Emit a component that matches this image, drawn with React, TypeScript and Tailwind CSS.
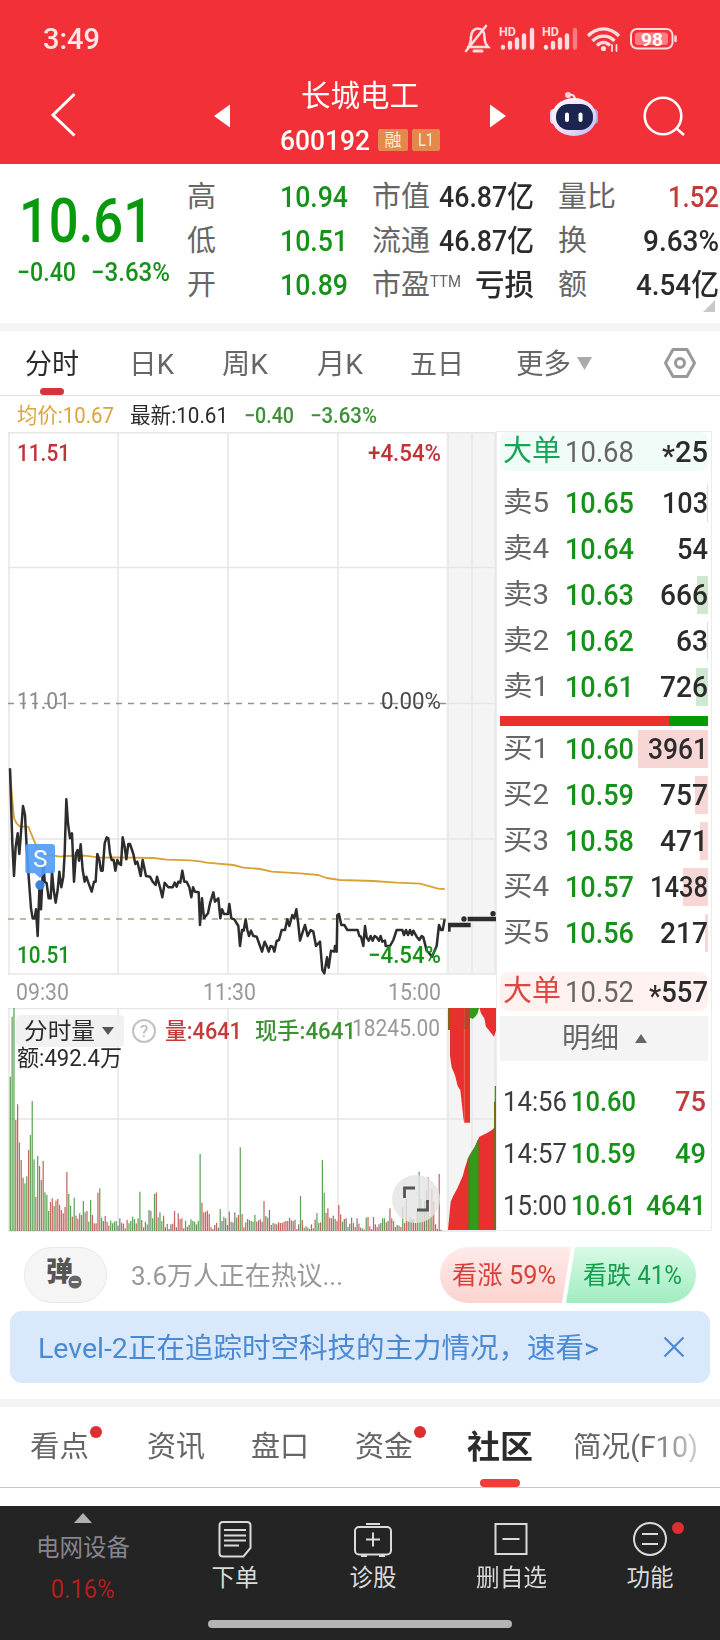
import { ReactNode, useLayoutEffect, useRef, useState } from "react";

/** One line of text squeezed or stretched horizontally to fill its own box. */
function Fit({ className = "", children }: { className?: string; children: ReactNode }) {
  const box = useRef<HTMLSpanElement>(null);
  const inner = useRef<HTMLSpanElement>(null);
  const [k, setK] = useState(1);
  useLayoutEffect(() => {
    if (box.current && inner.current && inner.current.offsetWidth) {
      setK(box.current.clientWidth / inner.current.getBoundingClientRect().width);
    }
  }, []);
  return (
    <span ref={box} className={"block shrink-0 whitespace-nowrap leading-none " + className}>
      <span ref={inner} className="inline-block origin-left" style={{ transform: `scaleX(${k})` }}>
        {children}
      </span>
    </span>
  );
}

function StatusIcons() {
  return (
    <svg width="216" height="32" viewBox="464 23 216 32" fill="none" stroke="#ffdcdd" strokeWidth="2.6" strokeLinecap="round">
      <path d="M468 47h20c-3-3-3.500-5-3.500-10 0-5-2.500-8.500-6.500-8.500s-7 3.500-7 8.500c0 4-.5 6-1.500 8M486 26l-20 25" />
      <path d="M474 51h8" strokeWidth="3" />
      <g strokeWidth="4.400">
        <path d="M503 47v.5M510 43v4.500M517 39.500v8M524 35.500v12M532 30v17.500" />
        <path d="M546 47v.5M553 43v4.500M560 39.500v8M567 35.500v12" />
        <path d="M575 30v17.500" opacity=".45" />
      </g>
      <g fill="#ffdcdd" stroke="none" fontFamily="Roboto, sans-serif" fontSize="12" fontWeight="700">
        <text x="499" y="36" textLength="17" lengthAdjust="spacingAndGlyphs">HD</text>
        <text x="542" y="36" textLength="17" lengthAdjust="spacingAndGlyphs">HD</text>
      </g>
      <g strokeWidth="3.400" strokeLinecap="butt">
        <path d="M588 36c9-9.500 22-9.500 31 0M592.500 41c6.500-6.500 16-6.500 22 0M597 45.500c4-4 9-4 13 0" />
      </g>
      <circle cx="603.500" cy="48.500" r="2.600" fill="#ffdcdd" stroke="none" />
      <path d="M612 45v6M616.500 45v6" strokeWidth="1.800" />
      <rect x="631" y="29" width="41.500" height="19.500" rx="6" strokeWidth="2" />
      <rect x="635" y="32.500" width="33" height="12.500" rx="3" fill="#ff7c82" stroke="none" />
      <path d="M675.500 36.500v4.500" strokeWidth="2.500" />
      <text x="641" y="45.500" fill="#fff" stroke="none" fontFamily="Roboto, sans-serif" fontSize="19" fontWeight="700" textLength="22" lengthAdjust="spacingAndGlyphs">98</text>
    </svg>
  );
}

function Robot() {
  return (
    <svg width="50" height="46" viewBox="549 91 50 46">
      <defs>
        <linearGradient id="shell" x1="0" y1="0" x2="1" y2="1">
          <stop offset="0" stopColor="#ffffff" />
          <stop offset=".6" stopColor="#e6defb" />
          <stop offset="1" stopColor="#b9b4f2" />
        </linearGradient>
      </defs>
      <path d="M575 100c0-4-2-6-6-5" fill="none" stroke="#f4dfe8" strokeWidth="2" />
      <circle cx="568" cy="95" r="3" fill="#ffd5dc" />
      <rect x="550" y="109" width="8" height="15" rx="4" fill="#dcd8fa" />
      <rect x="590" y="109" width="8" height="15" rx="4" fill="#aaa6ee" />
      <ellipse cx="574" cy="117" rx="22.500" ry="19" fill="url(#shell)" />
      <rect x="556" y="104" width="37" height="26" rx="12.500" fill="#1c2450" />
      <rect x="565" y="112.500" width="4" height="9.500" rx="2" fill="#fff" />
      <rect x="578.500" y="112.500" width="4" height="9.500" rx="2" fill="#fff" />
    </svg>
  );
}

function Header() {
  return (
    <header className="h-[164px] bg-[#f13038] text-white">
      <div className="flex h-[78px] items-center justify-between pl-[43px] pr-[40px]">
        <Fit className="w-[57px] text-[30px] font-medium text-[#ffe6e6]">3:49</Fit>
        <StatusIcons />
      </div>
      <div className="flex h-[86px]">
        <svg className="ml-[48px] mt-[12px] shrink-0" width="30" height="48" viewBox="48 90 30 48" fill="none" stroke="#fff" strokeWidth="3">
          <path d="M74.500 94L53 115l21.500 20.500" />
        </svg>
        <svg className="ml-[136px] mt-[26px] shrink-0" width="16" height="24" viewBox="0 0 16 24" fill="#fff">
          <path d="M0 12L16 .5v23z" />
        </svg>
        <div className="flex w-[260px] flex-col items-center">
          <Fit className="mt-[4px] w-[118px] text-[29.500px]">长城电工</Fit>
          <div className="mt-[14px] flex items-center">
            <Fit className="mt-px w-[90px] text-[28px] font-medium">600192</Fit>
            <span className="ml-[8px] flex h-[22px] w-[30px] items-center justify-center rounded-[2px] bg-[#e3894b] text-[17px] leading-none text-[#ffeeda]">融</span>
            <span className="ml-1 flex h-[22px] w-[28px] items-center justify-center rounded-[2px] bg-[#e3894b] text-[#ffeeda]"><Fit className="w-[16px] text-[18px]">L1</Fit></span>
          </div>
        </div>
        <svg className="mt-[26px] shrink-0" width="16" height="24" viewBox="0 0 16 24" fill="#fff">
          <path d="M16 12L0 .5v23z" />
        </svg>
        <div className="ml-[43px] mt-[13px] shrink-0"><Robot /></div>
        <svg className="ml-[42px] mt-[15px] shrink-0" width="46" height="46" viewBox="641 93 46 46" fill="none" stroke="#fff" strokeWidth="2.600">
          <circle cx="663" cy="116" r="18.300" />
          <path d="M676 128l8 7" />
        </svg>
      </div>
    </header>
  );
}

const G = "text-[#16911a]";
const stats = [
  ["高", "10.94", "市值", "46.87亿", "w-[95px]", "量比", "1.52", "w-[51px] text-[#c23b3b]"],
  ["低", "10.51", "流通", "46.87亿", "w-[95px]", "换", "9.63%", "w-[76px] text-[#2b2b2b]"],
  ["开", "10.89", "市盈", "亏损", "w-[59px]", "额", "4.54亿", "w-[83px] text-[#2b2b2b]"],
];

function Quote() {
  return (
    <section className="flex h-[159px] overflow-hidden">
      <div className="w-[187px] shrink-0 pt-[27px]">
        <Fit className="ml-[19px] w-[134px] text-[61px] font-medium text-[#089a0c]">10.61</Fit>
        <div className="mt-[7px] flex">
          <Fit className={"ml-[17px] w-[59px] text-[26px] font-medium " + G}>−0.40</Fit>
          <Fit className={"ml-[15px] w-[79px] text-[26px] font-medium " + G}>−3.63%</Fit>
        </div>
      </div>
      <div className="w-[533px] pt-[11px]">
        {stats.map((s) => (
          <div key={s[0]} className="grid h-[44px] grid-cols-[93px_92px_162px_185px] items-center text-[29px] leading-none text-[#666]">
            <span>{s[0]}</span>
            <Fit className={"w-[68px] text-[30px] font-medium " + G}>{s[1]}</Fit>
            <div className="flex items-center justify-between">
              <span className="flex">
                {s[2]}
                {s[2] === "市盈" && <span className="mt-[2px]"><Fit className="w-[31px] text-[17px]">TTM</Fit></span>}
              </span>
              <Fit className={"text-[30px] font-medium text-[#2b2b2b] " + s[4]}>{s[3]}</Fit>
            </div>
            <div className="ml-[24px] flex items-center justify-between">
              <span className="w-[60px]">{s[5]}</span>
              <Fit className={"text-[30px] font-medium " + s[7]}>{s[6]}</Fit>
            </div>
          </div>
        ))}
        <svg className="-mt-[7px] ml-[516px]" width="12" height="12" viewBox="0 0 12 12"><path d="M12 0v12H0z" fill="#c9c9c9" /></svg>
      </div>
    </section>
  );
}

function PeriodTabs() {
  return (
    <nav className="flex h-[65px] items-center border-b border-[#e2e2e2] pt-[3px] text-[28px] text-[#666]">
      <div className="relative ml-[25px] text-[#2b2b2b]">
        <Fit className="w-[54px]">分时</Fit>
        <span className="absolute left-[15px] top-[37px] h-[7px] w-[24px] rounded-full bg-[#d3353a]" />
      </div>
      <Fit className="ml-[50px] w-[45px]">日K</Fit>
      <Fit className="ml-[48px] w-[46px]">周K</Fit>
      <Fit className="ml-[49px] w-[46px]">月K</Fit>
      <Fit className="ml-[47px] w-[54px]">五日</Fit>
      <Fit className="ml-[52px] w-[55px]">更多</Fit>
      <svg className="-mt-[3px] ml-[6px]" width="15" height="13" viewBox="0 0 15 13"><path d="M0 0h15L7.500 13z" fill="#aaa" /></svg>
      <svg className="-mt-[3px] ml-[71px]" width="34" height="32" viewBox="0 0 34 32" fill="none" stroke="#999" strokeWidth="3">
        <path d="M10 2.500h14L31.500 16 24 29.500H10L2.500 16z" strokeLinejoin="round" />
        <circle cx="17" cy="16" r="4.500" />
      </svg>
    </nav>
  );
}

function Legend() {
  return (
    <div className="flex h-[35px] items-center pl-[17px] pt-[4px] text-[21.500px]">
      <Fit className="w-[97px] text-[#dba53c]">均价:10.67</Fit>
      <Fit className="ml-[16px] w-[98px] text-[#2b2b2b]">最新:10.61</Fit>
      <Fit className="ml-[16px] w-[50px] font-medium text-[#3c9132]">−0.40</Fit>
      <Fit className="ml-[16px] w-[67px] font-medium text-[#3c9132]">−3.63%</Fit>
    </div>
  );
}

const PRICE =
  "30,205 37,430 42,528 47,440 53,400 58,462 69,318 75,345 80,440 86,530 93,625 98,655 104,655 108,628 113,708 118,570 123,628 130,480 134,545 140,550 146,595 152,595 156,515 161,570 167,608 173,570 178,515 184,562 190,530 194,460 199,298 204,370 210,415 216,400 222,545 228,460 233,450 237,482 242,433 248,510 254,545 259,530 265,548 275,575 282,545 287,545 292,462 298,480 303,512 308,512 314,430 320,412 325,415 330,460 335,480 341,480 346,512 352,480 358,492 363,495 368,412 374,440 379,478 385,432 390,432 400,462 406,492 412,485 422,528 428,480 438,528 450,530 458,545 467,555 471,530 480,562 487,592 494,548 505,562 518,562 524,548 530,560 535,545 541,548 547,512 553,545 560,545 568,562 574,592 579,562 585,575 596,577 600,675 606,595 612,655 624,640 630,610 640,577 645,605 655,595 661,655 666,628 672,642 684,642 688,612 694,655 703,658 715,678 720,738 726,690 731,692 737,658 742,690 747,708 753,692 760,708 770,710 780,738 786,755 794,725 800,738 806,755 812,738 818,740 823,755 830,723 837,720 845,690 855,690 862,658 868,678 877,645 883,655 889,628 894,665 900,722 910,690 915,675 923,708 932,690 940,695 948,738 960,725 967,810 973,820 981,772 986,803 993,752 1003,755 1005,738 1010,755 1012,645 1017,642 1024,675 1033,675 1042,690 1073,690 1078,708 1083,710 1090,738 1095,678 1100,712 1106,722 1112,708 1118,722 1124,708 1130,712 1137,722 1142,708 1147,725 1155,722 1157,738 1170,738 1180,720 1190,690 1207,690 1212,705 1218,690 1224,705 1230,690 1236,705 1240,692 1250,710 1258,720 1265,708 1270,712 1280,752 1288,760 1296,770 1310,738 1317,675 1323,690 1328,690 1334,658";
const AVERAGE =
  "30,205 36,290 42,355 50,370 60,380 85,380 93,400 110,440 125,458 150,465 180,470 200,468 255,467 300,473 350,472 460,474 500,479 570,481 600,484 620,488 700,495 730,503 780,507 815,515 900,520 955,525 980,534 1020,540 1120,543 1190,548 1260,551 1290,559 1314,566 1334,567";

const GRID = "#e6e6e6";

function PriceChart() {
  return (
    <div className="relative h-[544px]">
      <svg className="block" width="488" height="544" viewBox="8 432 488 544" fill="none">
        <rect x="446.500" y="433" width="50" height="541" fill="#f4f4f4" />
        <g stroke={GRID} strokeWidth="1.500">
          <path d="M8 432.800h488M8 567.500h488M8 839h488M8 974h488M446 703.500h50" />
          <path d="M9 432v542M118 432v542M228 432v542M338 432v542M448 432v542M472 432v542M495.500 432v542" />
        </g>
        <path d="M8 703.500h438" stroke="#929292" strokeWidth="1.700" strokeDasharray="6 6" />
        <path d="M8 919h438" stroke="#b89c74" strokeWidth="1.700" strokeDasharray="6 6" />
      </svg>
      <Fit className="absolute left-[9px] top-[9px] w-[53px] text-[24px] font-medium text-[#c23339]">11.51</Fit>
      <Fit className="absolute left-[360px] top-[9px] w-[73px] text-[24px] font-medium text-[#c23339]">+4.54%</Fit>
      <Fit className="absolute left-[9px] top-[257px] w-[53px] text-[24px] text-[#8c8c8c]">11.01</Fit>
      <Fit className="absolute left-[373px] top-[257px] w-[60px] text-[24px] text-[#4a4a4a]">0.00%</Fit>
      <Fit className={"absolute left-[9px] top-[511px] w-[53px] text-[24px] font-medium " + G}>10.51</Fit>
      <svg className="absolute inset-0" width="488" height="544" viewBox="8 432 488 544" fill="none">
        <g transform="translate(0 700) scale(.33333)" strokeLinejoin="round">
          <polyline points={AVERAGE} stroke="#d9a232" strokeWidth="5.500" />
          <polyline points={PRICE} stroke="#2d2d2d" strokeWidth="7.500" />
          <path d="M1348 695v-26" stroke="#2d2d2d" strokeWidth="8" />
          <path d="M1345 675h67M1403 657h85" stroke="#2d2d2d" strokeWidth="13" />
          <circle cx="1392" cy="657" r="8" fill="#2d2d2d" />
          <circle cx="1479" cy="641" r="8" fill="#2d2d2d" />
          <path d="M84 432h72q9 0 9 9v72q0 7-9 7h-20l-16 14-16-14H84q-8 0-8-7v-72q0-9 8-9z" fill="#549df8" opacity=".92" />
          <circle cx="120" cy="555" r="14" fill="#3b80d8" />
        </g>
      </svg>
      <span className="absolute left-[25px] top-[415px] text-[24px] leading-none text-white">S</span>
      <Fit className={"absolute left-[360px] top-[511px] w-[73px] text-[24px] font-medium " + G}>−4.54%</Fit>
    </div>
  );
}

const BARS =
  "g463 g643 g671 r333 r380 g266 r213 r160 g143 g164 r243 g288 g390 g215 r102 g225 r195 g153 r210 g116 g108 g60 r87 r98 g75 r91 r96 r78 r63 r53 r72 r177 g111 g76 r43 g100 r46 r37 g53 r48 g90 g56 r60 g28 g93 r48 r23 r23 r115 g128 g40 k30 r45 r28 r16 g31 g23 g28 g30 k16 k38 r25 r22 g8 r33 g23 g30 g43 g36 r23 g38 g118 r33 r11 g28 g20 k63 g60 g38 g111 r116 g41 g56 g30 r46 k11 g21 k6 k20 r22 r60 k11 r53 r36 r38 k8 g31 r13 k18 g35 g30 g28 k20 g30 g231 r85 r56 r58 r61 r51 r11 r6 k18 r25 k10 g66 k30 g43 k38 r18 r58 g28 k26 k56 g40 r48 g251 r51 r11 r26 g36 g33 g30 g28 g48 r28 k32 r35 k28 r90 g45 r40 k63 r18 g24 r22 k20 r26 r24 r24 r28 r30 r30 r40 g32 k30 r34 r6 k20 g105 r33 g10 r14 g10 r6 k20 g8 r34 g54 g24 r26 g213 g115 r54 r68 r40 r38 k46 g36 r30 r78 r50 g28 k36 k38 g12 k22 r40 g24 r12 k38 r22 k10 g8 r4 g40 r42 r14 r6 r42 k20 r12 r20 k24 g38 g38 r26 k30 r68 r38 g30 r12 k18 g16 r12 g73 r24 r96 k30 g42 r36 r36 r24 r58 g178 g96 r60 k90 g123 r161 g45 r126 r88 k20 k6 r171 r4";

const BAR_FILL: Record<string, string> = { g: "#4f9a48", r: "#c25550", k: "#6f6f6f" };

function VolumeChart() {
  return (
    <div className="relative h-[224px]">
      <svg className="block" width="488" height="224" viewBox="8 1008 488 224">
        <rect x="446.500" y="1008" width="50" height="223" fill="#f4f4f4" />
        <g stroke={GRID} strokeWidth="1.500" fill="none">
          <path d="M8 1008.500h488M8 1119h488M8 1231h488" />
          <path d="M9 1008v223M118 1008v223M228 1008v223M338 1008v223M448 1008v223M472 1008v223M495.500 1008v223" />
        </g>
        {BARS.split(" ").map((b, i) => {
          const h = Number(b.slice(1)) / 3;
          return <rect key={i} x={9.700 + i * 1.825} y={1231 - h} width="1.250" height={h} fill={BAR_FILL[b[0]]} opacity=".9" />;
        })}
        <g transform="translate(240 975) scale(.33333)">
          <path d="M624 97h8v68h-8z" fill="#7a6a1e" />
          <path d="M630 97h60v346h-17l-3-15-3-28-6-55-8-12-8-32-10-24-5-35z" fill="#e8302f" />
          <path d="M673 97v345" stroke="#f08060" strokeWidth="2" />
          <path d="M670 97h18v65h-18z" fill="#a24b20" opacity=".5" />
          <path d="M690 97h28l-6 20-8 10-6 5-8-4z" fill="#339a1c" />
          <path d="M718 97h50v70l-6 18-14-18-10-12-5-25-10-15z" fill="#e8302f" />
          <path d="M624 765l8-85 8-18 12-22 16-36 8-30 10-29 18-29 14-31 22-10 16-10 6-6V380h6v385z" fill="#e8302f" />
          <path d="M686 765V545l18-29 12-25v274z" fill="#339a1c" />
          <path d="M683 550h6v215h-6zM713 495h6v270h-6zM762 380h6v385h-6z" fill="#7c6a18" />
          <path d="M764 333h4v50h-4z" fill="#339a1c" />
        </g>
        <circle cx="416" cy="1199" r="24" fill="#e4e4e4" opacity=".82" />
        <path d="M404.500 1198v-10h10.500M417 1210h10.500v-10" fill="none" stroke="#555" strokeWidth="2.800" />
      </svg>
      <div className="absolute left-[8px] top-[7px] flex h-[32px] items-center text-[23px]">
        <div className="flex h-[32px] w-[108px] items-center rounded-[4px] bg-[#f0f0f0]/95 pl-[8px] text-[#2b2b2b]">
          <Fit className="mt-px w-[71px]">分时量</Fit>
          <svg className="ml-[7px]" width="12" height="8" viewBox="0 0 12 8"><path d="M0 0h12L6 8z" fill="#555" /></svg>
        </div>
        <span className="ml-[8px] flex h-[24px] w-[24px] items-center justify-center rounded-full border-2 border-[#c2c2c2] text-[17px] leading-none text-[#b4b4b4]">?</span>
        <Fit className="ml-[9px] mt-px w-[77px] font-medium text-[#c43b3b]">量:4641</Fit>
        <Fit className="ml-[13px] mt-px w-[101px] font-medium text-[#3c9132]">现手:4641</Fit>
      </div>
      <Fit className="absolute left-[344px] top-[8px] w-[88px] text-[24px] text-[#999]">18245.00</Fit>
      <Fit className="absolute left-[9px] top-[39px] w-[105px] text-[23px] text-[#2b2b2b]">额:492.4万</Fit>
    </div>
  );
}

const sells = [
  ["卖5", "10.65", "103", "w-[46px]", "w-px"],
  ["卖4", "10.64", "54", "w-[31px]", "w-0"],
  ["卖3", "10.63", "666", "w-[48px]", "w-[11px]"],
  ["卖2", "10.62", "63", "w-[32px]", "w-px"],
  ["卖1", "10.61", "726", "w-[48px]", "w-[12px]"],
];
const buys = [
  ["买1", "10.60", "3961", "w-[60px]", "w-[70px]"],
  ["买2", "10.59", "757", "w-[48px]", "w-[13px]"],
  ["买3", "10.58", "471", "w-[48px]", "w-[8px]"],
  ["买4", "10.57", "1438", "w-[58px]", "w-[25px]"],
  ["买5", "10.56", "217", "w-[48px]", "w-[3px]"],
];
const trades = [
  ["14:56", "10.60", "75", "w-[31px] text-[#c23b3b]"],
  ["14:57", "10.59", "49", "w-[31px] " + G],
  ["15:00", "10.61", "4641", "w-[60px] " + G],
];

function Level({ row, fill }: { row: string[]; fill: string }) {
  return (
    <div className="relative flex h-[46px] items-center">
      <span className={"absolute right-0 top-[4px] h-[38px] " + fill + " " + row[4]} />
      <Fit className="relative ml-[3px] w-[46px] text-[28px] text-[#666]">{row[0]}</Fit>
      <Fit className={"relative ml-[16px] w-[69px] text-[30px] font-medium " + G}>{row[1]}</Fit>
      <Fit className={"relative ml-auto text-[30px] font-medium text-[#2b2b2b] " + row[3]}>{row[2]}</Fit>
    </div>
  );
}

function BigOrder({ price, volume, tone, width }: { price: string; volume: string; tone: string; width: string }) {
  return (
    <div className={"flex h-[39px] items-center rounded-[8px] " + tone}>
      <Fit className="ml-[3px] w-[58px] text-[29px]">大单</Fit>
      <Fit className="ml-[4px] w-[69px] text-[30px] text-[#666]">{price}</Fit>
      <Fit className={"ml-auto text-[30px] font-medium text-[#2b2b2b] " + width}>
        <span className="inline-block translate-y-[4px]">*</span>
        {volume}
      </Fit>
    </div>
  );
}

function OrderBook() {
  return (
    <aside className="-mt-px h-[800px] w-[216px] shrink-0 border border-[#ececec] pl-[3px] pr-[3px]">
      <BigOrder price="10.68" volume="25" tone="bg-[#f1fbf7] text-[#14a556]" width="w-[46px]" />
      <div className="mt-[9px]">
        {sells.map((r) => <Level key={r[0]} row={r} fill="bg-[#cfe9d0]" />)}
      </div>
      <div className="mt-[6px] flex h-[10px]">
        <span className="w-[169px] bg-[#e8302f]" />
        <span className="flex-1 bg-[#029c02]" />
      </div>
      <div>
        {buys.map((r) => <Level key={r[0]} row={r} fill="bg-[#f9d6d6]" />)}
      </div>
      <div className="mt-[16px]">
        <BigOrder price="10.52" volume="557" tone="bg-[#fef1f0] text-[#dc4540]" width="w-[59px]" />
      </div>
      <div className="mt-[5px] flex h-[45px] items-center justify-center bg-[#f4f4f4] text-[28px] text-[#666]">
        <Fit className="w-[57px]">明细</Fit>
        <svg className="ml-[16px]" width="12" height="9" viewBox="0 0 12 9"><path d="M6 0l6 9H0z" fill="#666" /></svg>
      </div>
      <div className="mt-[15px]">
        {trades.map((t) => (
          <div key={t[0]} className="flex h-[52px] items-center text-[27px] font-medium">
            <Fit className="ml-[3px] w-[64px] font-normal text-[#3c3c3c]">{t[0]}</Fit>
            <Fit className={"ml-[4px] w-[65px] " + G}>{t[1]}</Fit>
            <Fit className={"ml-auto mr-[2px] " + t[3]}>{t[2]}</Fit>
          </div>
        ))}
      </div>
    </aside>
  );
}

function Sentiment() {
  return (
    <div className="flex h-[56px] items-center pl-[24px]">
      <div className="relative flex h-[56px] w-[83px] items-center justify-center rounded-[28px] border border-[#e8e8e8] bg-[#f5f5f5]">
        <span className="-translate-x-[6px] -translate-y-[3px] text-[27px] font-black leading-none text-[#555]">弹</span>
        <svg className="absolute left-[42px] top-[26px]" width="16" height="16" viewBox="0 0 16 16">
          <circle cx="8" cy="8" r="7.300" fill="#666" stroke="#f5f5f5" strokeWidth="1.400" />
          <path d="M4.500 8h7" stroke="#fff" strokeWidth="1.800" />
        </svg>
      </div>
      <Fit className="ml-[24px] mt-px w-[212px] text-[26px] text-[#999]">3.6万人正在热议...</Fit>
      <div className="ml-[97px] flex h-[56px] w-[131px] items-center bg-gradient-to-b from-[#feebea] to-[#fcd3cf] pl-[12px] [border-radius:28px_0_0_28px] [clip-path:polygon(0_0,100%_0,93%_100%,0_100%)]">
        <Fit className="mt-px w-[104px] text-[25px] text-[#d5403b]">看涨 59%</Fit>
      </div>
      <div className="-ml-[5px] flex h-[56px] w-[130px] items-center bg-gradient-to-b from-[#d8fae5] to-[#a0ecc0] pl-[17px] [border-radius:0_28px_28px_0] [clip-path:polygon(7%_0,100%_0,100%_100%,0_100%)]">
        <Fit className="mt-px w-[99px] text-[25px] text-[#13a04c]">看跌 41%</Fit>
      </div>
    </div>
  );
}

function Banner() {
  return (
    <div className="mx-[10px] mt-[8px] flex h-[72px] items-center rounded-[12px] bg-[#d9e8fb] pl-[28px] text-[#4a8ad4]">
      <Fit className="mt-[3px] w-[561px] text-[28px]">Level-2正在追踪时空科技的主力情况，速看&gt;</Fit>
      <svg className="ml-[64px]" width="22" height="22" viewBox="0 0 22 22" fill="none" stroke="#4a8ad4" strokeWidth="2.200"><path d="M1.500 1.500l19 19M20.500 1.500l-19 19" /></svg>
    </div>
  );
}

function Dot({ className }: { className: string }) {
  return <span className={"absolute h-[12px] w-[12px] rounded-full bg-[#dc2f30] " + className} />;
}

function ContentTabs() {
  return (
    <nav className="flex h-[81px] items-center border-b border-[#c8c8c8] text-[29px] text-[#666]">
      <div className="relative ml-[30px]"><Fit className="mt-px w-[59px]">看点</Fit><Dot className="-top-[6px] left-[60px]" /></div>
      <Fit className="ml-[58px] mt-px w-[58px]">资讯</Fit>
      <Fit className="ml-[46px] mt-px w-[58px]">盘口</Fit>
      <div className="relative ml-[46px]"><Fit className="mt-px w-[58px]">资金</Fit><Dot className="-top-[6px] left-[59px]" /></div>
      <div className="relative ml-[54px] text-[#2b2b2b]">
        <Fit className="w-[66px] text-[32px] font-bold">社区</Fit>
        <span className="absolute left-[13px] top-[48px] h-[8px] w-[40px] rounded-full bg-[#f13d35]" />
      </div>
      <Fit className="ml-[40px] mt-px w-[125px] [mask-image:linear-gradient(to_right,black_60%,rgba(0,0,0,0.3))]">简况(F10)</Fit>
    </nav>
  );
}

function BottomBar() {
  return (
    <footer className="h-[134px] bg-[#242424] text-[#dadada]">
      <div className="flex h-[114px]">
        <div className="flex w-[166px] flex-col items-center pt-[7px]">
          <svg width="18" height="10" viewBox="0 0 18 10"><path d="M9 0l9 10H0z" fill="#b0b0b0" /></svg>
          <Fit className="mt-[14px] w-[94px] text-[23.500px] text-[#858590]">电网设备</Fit>
          <Fit className="mt-[15px] w-[64px] text-[26px] text-[#bb1c1c]">0.16%</Fit>
        </div>
        <div className="flex w-[138px] flex-col items-center pt-[14px]">
          <svg width="36" height="38" viewBox="0 0 36 38" fill="none" stroke="#dadada" strokeWidth="2">
            <path d="M6 2h24q3.500 0 3.500 3.500V28l-7 8.500H6Q2.500 36.500 2.500 33V5.500Q2.500 2 6 2z" />
            <path d="M7 10h22M7 15.500h22M7 20.500h22M7 25.500h15" />
          </svg>
          <Fit className="mt-[9px] w-[47px] text-[23.500px]">下单</Fit>
        </div>
        <div className="flex w-[138px] flex-col items-center pt-[14px]">
          <svg width="40" height="38" viewBox="0 0 40 38" fill="none" stroke="#dadada" strokeWidth="2">
            <rect x="2" y="7" width="36" height="27.500" rx="4" />
            <path d="M13 4h14M13 19.500h14M20 12.500v14M8 36h6M26 36h6" />
          </svg>
          <Fit className="mt-[9px] w-[47px] text-[23.500px]">诊股</Fit>
        </div>
        <div className="flex w-[138px] flex-col items-center pt-[14px]">
          <svg width="36" height="38" viewBox="0 0 36 38" fill="none" stroke="#dadada" strokeWidth="2">
            <path d="M2.500 4h31v30h-31zM9.500 19h17" />
          </svg>
          <Fit className="mt-[9px] w-[71px] text-[23.500px]">删自选</Fit>
        </div>
        <div className="relative flex w-[140px] flex-col items-center pt-[14px]">
          <svg width="36" height="38" viewBox="0 0 36 38" fill="none" stroke="#dadada" strokeWidth="2">
            <circle cx="18" cy="19" r="16" />
            <path d="M10 14h16M10 24h16" />
          </svg>
          <Dot className="left-[92px] top-[16px]" />
          <Fit className="mt-[9px] w-[47px] text-[23.500px]">功能</Fit>
        </div>
      </div>
      <div className="mx-auto h-[8px] w-[304px] rounded-full bg-[#b4b4b4]" />
    </footer>
  );
}

export default function App() {
  return (
    <div className="flex h-[1640px] w-[720px] flex-col overflow-hidden bg-white font-['Roboto','Noto_Sans_CJK_SC',sans-serif]">
      <Header />
      <Quote />
      <div className="h-[8px] bg-[#f4f4f4]" />
      <PeriodTabs />
      <Legend />
      <div className="mt-px flex h-[801px] shrink-0 items-start pl-[8px]">
        <div className="w-[488px] shrink-0">
          <PriceChart />
          <div className="flex h-[32px] items-center pl-[8px] text-[24px] text-[#999]">
            <Fit className="w-[53px]">09:30</Fit>
            <Fit className="ml-[134px] w-[53px]">11:30</Fit>
            <Fit className="ml-[132px] w-[53px]">15:00</Fit>
          </div>
          <VolumeChart />
        </div>
        <OrderBook />
      </div>
      <div className="mt-[14px]"><Sentiment /></div>
      <Banner />
      <div className="mt-[16px] h-[8px] bg-[#f4f4f4]" />
      <ContentTabs />
      <div className="h-[18px]" />
      <BottomBar />
    </div>
  );
}
